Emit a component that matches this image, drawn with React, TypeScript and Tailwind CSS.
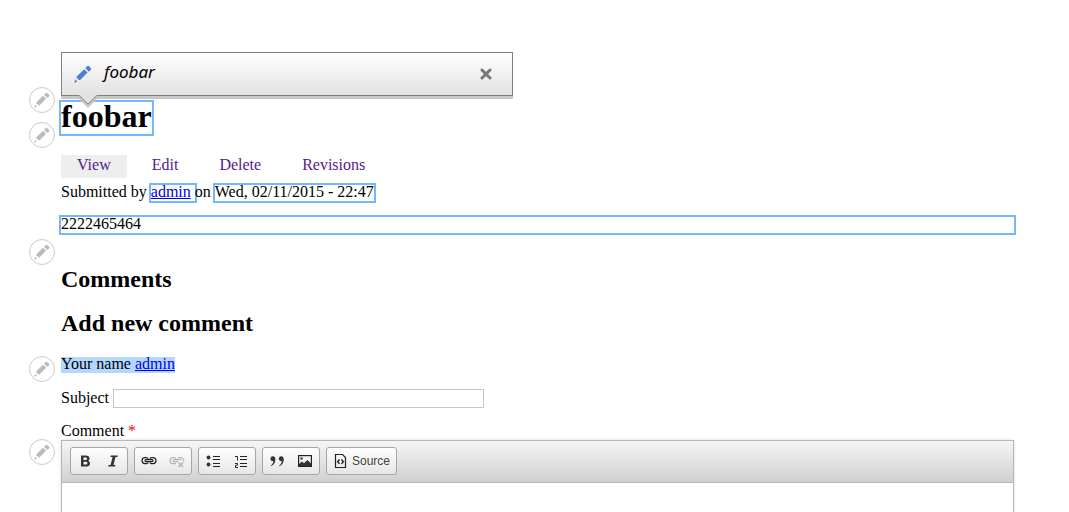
import type { ReactNode } from "react";

function Pencil({ className }: { className: string }) {
  return (
    <svg viewBox="0 0 18 18" className={className} fill="currentColor" aria-hidden="true">
      <path d="M2.6 11.6 10.2 4.2 13.6 7.6 6.1 15.1 4.4 15 4.2 13.6 2.7 13.4Z" />
      <path d="M11.3 3.1 13.2 1.1 14.5.8 17.2 3.5 16.9 4.8 14.9 6.7Z" />
      <path d="M1.7 14.6 3.3 16.2 1 17.7.2 16.9Z" />
    </svg>
  );
}

function ContextualButton({ label }: { label: string }) {
  return (
    <button
      type="button"
      aria-label={label}
      className="flex size-[26px] shrink-0 items-center justify-center rounded-full border border-[#ccc] bg-white text-[#bbb]"
    >
      <Pencil className="size-4" />
    </button>
  );
}

function ToolGroup({ children }: { children: ReactNode }) {
  return (
    <div className="flex h-7 rounded-[3px] border border-[#a6a6a6] bg-linear-to-b from-white to-[#e6e6e6]">
      {children}
    </div>
  );
}

function Tool({ label, children }: { label: string; children: ReactNode }) {
  return (
    <button type="button" aria-label={label} className="flex w-7 items-center justify-center">
      <svg viewBox="0 0 16 16" className="size-4" aria-hidden="true">
        {children}
      </svg>
    </button>
  );
}

function Toolbar() {
  return (
    <div className="flex h-[42px] gap-1.5 border-b border-[#b6b6b6] bg-linear-to-b from-[#f5f5f5] to-[#cfd1cf] px-2 pt-1.5">
      <ToolGroup>
        <Tool label="Bold">
          <path
            fill="#333"
            fillRule="evenodd"
            d="M4 2.5H8.5C11.2 2.5 12.6 3.6 12.6 5.4 12.6 6.6 11.9 7.4 10.8 7.8 12.2 8.1 13 9.1 13 10.4 13 12.4 11.5 13.5 8.8 13.5H4ZM6.5 4.4V7H8.3C9.5 7 10 6.5 10 5.7 10 4.8 9.4 4.4 8.3 4.4ZM6.5 8.8V11.6H8.5C9.8 11.6 10.4 11.1 10.4 10.2 10.4 9.3 9.8 8.8 8.5 8.8Z"
          />
        </Tool>
        <Tool label="Italic">
          <path fill="#333" d="M5.8 2.5H12.8L12.5 4H10.5L8.5 12H10.5L10.1 13.5H3.2L3.6 12H5.6L7.6 4H5.4Z" />
        </Tool>
      </ToolGroup>
      <ToolGroup>
        <Tool label="Link">
          <g fill="none" stroke="#222" strokeWidth="1.2">
            <path d="M7.2 5.6A2.6 2.6 0 0 0 5.5 4.6H4A3 3 0 0 0 4 10.6H5.5A2.6 2.6 0 0 0 7.2 9.6" />
            <path d="M8.8 5.6A2.6 2.6 0 0 1 10.5 4.6H12A3 3 0 0 1 12 10.6H10.5A2.6 2.6 0 0 1 8.8 9.6" />
            <rect x="4" y="6.6" width="8" height="2" rx="1" />
          </g>
        </Tool>
        <Tool label="Unlink">
          <g fill="none" stroke="#b5b5b5" strokeWidth="1.2">
            <path d="M7.2 5.6A2.6 2.6 0 0 0 5.5 4.6H4A3 3 0 0 0 4 10.6H7" />
            <path d="M8.8 5.6A2.6 2.6 0 0 1 10.5 4.6H12A3 3 0 0 1 14.6 8.6" />
            <path d="M9 8.6H5A1 1 0 0 1 5 6.6H11A1 1 0 0 1 12 7.6" />
            <path d="M9.5 9.5 14 14M14 9.5 9.5 14" strokeWidth="1.6" />
          </g>
        </Tool>
      </ToolGroup>
      <ToolGroup>
        <Tool label="Bulleted list">
          <circle cx="3.5" cy="4.5" r="1.9" fill="#333" />
          <circle cx="3.5" cy="11.5" r="1.9" fill="#333" />
          <path d="M8 3.5H15M8 6.5H15M8 10.5H15M8 13.5H15" stroke="#222" />
        </Tool>
        <Tool label="Numbered list">
          <path d="M2 3.5H4.5V7.5M2 10.5H4.5V12L2.5 12.5V14.5H5" fill="none" stroke="#222" />
          <path d="M7 3.5H14M7 6.5H14M7 10.5H14M7 13.5H14" stroke="#222" />
        </Tool>
      </ToolGroup>
      <ToolGroup>
        <Tool label="Block quote">
          <g fill="#333">
            <path d="M1.4 5.4A2.5 2.4 0 0 1 6.3 5.2C6.7 8.8 5.4 11.7 2.2 13.2L1.8 12.5C3.4 11.4 4.3 9.8 4.4 7.9 2.6 8.3 1.4 7.1 1.4 5.4Z" />
            <path d="M9.8 5.4A2.5 2.4 0 0 1 14.7 5.2C15.1 8.8 13.8 11.7 10.6 13.2L10.2 12.5C11.8 11.4 12.7 9.8 12.8 7.9 11 8.3 9.8 7.1 9.8 5.4Z" />
          </g>
        </Tool>
        <Tool label="Image">
          <rect x="1.6" y="2.6" width="12.8" height="10.8" fill="none" stroke="#222" strokeWidth="1.2" />
          <circle cx="4.6" cy="5.4" r="1.2" fill="#333" />
          <path d="M2 13V11L5 8.5 7 10.3 10.5 7 14 10.5V13Z" fill="#333" />
        </Tool>
      </ToolGroup>
      <ToolGroup>
        <button type="button" className="flex items-center gap-[3px] px-1.5">
          <svg viewBox="0 0 16 16" className="size-4" fill="none" stroke="#222" aria-hidden="true">
            <path d="M2.5 1.5H9.5L12.5 4.5V14.5H2.5Z" strokeWidth="1.2" />
            <path d="M6.6 6.5 4.6 8.7 6.6 10.9M8.4 6.5 10.4 8.7 8.4 10.9" strokeWidth="1.4" />
          </svg>
          <span className="font-['Liberation_Sans',Arial,sans-serif] text-xs text-[#444]">Source</span>
        </button>
      </ToolGroup>
    </div>
  );
}

function EditPopup() {
  return (
    <div className="relative flex h-11 max-w-[452px] items-center border border-[#808080] bg-linear-to-b from-white to-[#e2e2e2] pr-5 pl-3 shadow-[0_3px_0_#c8c8c8]">
      <Pencil className="size-[18px] text-[#4f7fd0]" />
      <span className="ml-3 grow pb-1 font-['Noto_Sans',sans-serif] text-[17px] italic">foobar</span>
      <button type="button" aria-label="Close" className="text-[#777]">
        <svg viewBox="0 0 12 12" className="size-3" stroke="currentColor" strokeWidth="3" strokeLinecap="round">
          <path d="M2 2 10 10M10 2 2 10" />
        </svg>
      </button>
      <svg viewBox="0 0 22 13" className="absolute top-[42px] left-[15px] h-[13px] w-[22px]" aria-hidden="true">
        <path d="M2 4 11 13 20 4Z" fill="#c8c8c8" />
        <path d="M2 0 11 9.3 20 0Z" fill="#e2e2e2" />
        <path d="M2.5 1 11 9.2 19.5 1" fill="none" stroke="#808080" />
      </svg>
    </div>
  );
}

const tabs = ["Edit", "Delete", "Revisions"];

export default function App() {
  return (
    <div className="flex min-h-screen gap-1.5 bg-white pr-[55px] pl-[29px] font-['Liberation_Serif',serif] text-base leading-[14px] text-black">
      <aside className="flex flex-col pt-[87px]">
        <ContextualButton label="Configure title" />
        <div className="mt-[9px]">
          <ContextualButton label="Configure tabs" />
        </div>
        <div className="mt-[91px]">
          <ContextualButton label="Configure content" />
        </div>
        <div className="mt-[91px]">
          <ContextualButton label="Configure author" />
        </div>
        <div className="mt-[57px]">
          <ContextualButton label="Configure comment form" />
        </div>
      </aside>
      <main className="flex min-w-0 grow flex-col pt-[52px]">
        <div className="relative z-10">
          <EditPopup />
        </div>
        <h1 className="mt-1.5 self-start pb-1 text-[32px] leading-7 font-bold outline-2 outline-[#74b7ff]">
          foobar
        </h1>
        <nav className="mt-[21px] flex gap-[9px] leading-5 text-[#551a8b]">
          <a href="#view" className="bg-[#eee] px-4 pb-[3px]">
            View
          </a>
          {tabs.map((tab) => (
            <a key={tab} href={`#${tab.toLowerCase()}`} className="px-4">
              {tab}
            </a>
          ))}
        </nav>
        <p className="mt-[7px] flex whitespace-pre">
          <span>Submitted by </span>
          <span className="pb-0.5 outline-2 outline-[#74b7ff]">
            <a href="#admin" className="text-[#0000ee] underline">
              admin
            </a>{" "}
          </span>
          <span>on </span>
          <span className="pb-0.5 outline-2 outline-[#74b7ff]">Wed, 02/11/2015 - 22:47</span>
        </p>
        <div className="mt-4 pb-0.5 outline-2 outline-[#74b7ff]">2222465464</div>
        <h2 className="mt-8 text-2xl leading-7 font-bold">Comments</h2>
        <h2 className="mt-4 text-2xl leading-7 font-bold">Add new comment</h2>
        <form className="flex grow flex-col">
          <p className="mt-5 self-start bg-[#b3d7ff] pb-0.5">
            Your name{" "}
            <a href="#admin" className="text-[#0000ee] underline">
              admin
            </a>
          </p>
          <div className="mt-4 flex items-center gap-1">
            <label htmlFor="subject" className="pb-0.5">
              Subject
            </label>
            <input id="subject" type="text" className="h-[19px] w-[371px] border border-[#c6c6c6] px-1 outline-none" />
          </div>
          <label htmlFor="comment" className="mt-4">
            Comment <span className="text-[#f00]">*</span>
          </label>
          <div className="mt-0.5 flex grow flex-col border border-b-0 border-[#b6b6b6] shadow-[0_0_3px_rgba(0,0,0,0.15)]">
            <Toolbar />
            <textarea id="comment" className="grow resize-none p-2 outline-none" />
          </div>
        </form>
      </main>
    </div>
  );
}
